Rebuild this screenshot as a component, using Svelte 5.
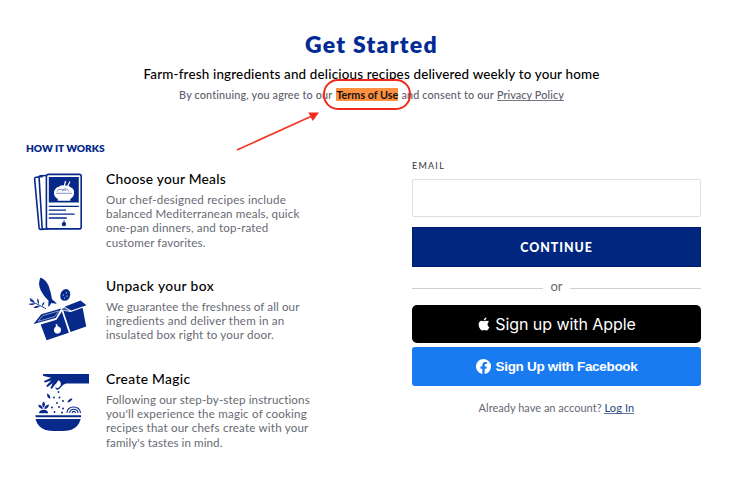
<script>
  const steps = [
    {
      icon: 'cards',
      title: 'Choose your Meals',
      width: 120,
      lines: [
        ['Our chef-designed recipes include', 180],
        ['balanced Mediterranean meals, quick', 193.5],
        ['one-pan dinners, and top-rated', 162.5],
        ['customer favorites.', 99.5],
      ],
    },
    {
      icon: 'box',
      title: 'Unpack your box',
      width: 108,
      lines: [
        ['We guarantee the freshness of all our', 193.5],
        ['ingredients and deliver them in an', 178.5],
        ['insulated box right to your door.', 168],
      ],
    },
    {
      icon: 'bowl',
      title: 'Create Magic',
      width: 84.5,
      lines: [
        ['Following our step-by-step instructions', 204],
        ["you'll experience the magic of cooking", 201],
        ['recipes that our chefs create with your', 202.5],
        ["family's tastes in mind.", 116.5],
      ],
    },
  ];

  // Herbs and salt falling into the bowl.
  const sprinkles = [
    [28.5, 22], [24, 27.5], [29.5, 27.5], [33, 31], [27, 33], [22, 37.5],
    [29, 37], [33, 38.5], [24.5, 42], [32, 42.5],
  ];

  // Tracks a line of text so that it sets to the given measure.
  function fit(node, width) {
    node.style.letterSpacing = '0px';
    const natural = node.getBoundingClientRect().width;
    node.style.letterSpacing = `${(width - natural) / node.textContent.length}px`;
  }
</script>

<main>
  <header>
    <h1><span use:fit={133}>Get Started</span></h1>
    <p class="lead"><span use:fit={456}>Farm-fresh ingredients and delicious recipes delivered weekly to your home</span></p>
    <p class="legal">
      <span use:fit={153.5}>By continuing, you agree to our</span>
      <span class="terms"><mark use:fit={62}>Terms of Use</mark>
        <svg class="callout" width="180" height="80" viewBox="0 0 180 80">
          <rect x="89" y="4" width="86" height="29" rx="14" fill="none" stroke="#ef2b20" stroke-width="2" />
          <path d="M2 74 77 40" stroke="#f13a25" stroke-width="1.8" />
          <path d="M84 36.500 77.700 45 73.400 36.500Z" fill="#f12b1c" />
        </svg>
      </span>
      <span use:fit={92.5}>and consent to our</span>
      <a href="#privacy" use:fit={67}>Privacy Policy</a>
    </p>
  </header>

  <div class="columns">
    <section class="how">
      <h2><span use:fit={78.5}>HOW IT WORKS</span></h2>
      {#each steps as step}
        <article class={step.icon}>
          <div class="icon">
            {#if step.icon === 'cards'}
              <svg width="60" height="64" viewBox="0 0 60 64" fill="none" stroke="#06298a" stroke-width="1.6">
                <path d="m17 6.5-7 .7q-1.5.2-1.4 1.7l4.5 49q.2 1.6 1.8 1.5l8-.7M21 5.500l-6.500.3q-1.500.1-1.400 1.600l3 50.300q.1 1.400 1.500 1.400l5-.2" />
                <rect x="20.400" y="4.400" width="34.800" height="54.500" rx="2" fill="#fff" />
                <path d="M22.800 7h30v25.500h-30z" fill="#06298a" stroke="none" />
                <path d="M28 22q1-4.500 5-5.200 2-2.500 5-1.200 5-.5 7 1.800 3 1 3 4.600v2H28z" fill="#fff" stroke="none" />
                <path d="M28 22.500h20q0 4.500-3.700 6.500v1.700H31.800V29Q28 27 28 22.500Z" fill="#fff" stroke="none" />
                <path d="M31 21.500q1-3 3.500-2t4.500-.8q3 0 4 2.800M36 21q2-2 4-.4M30 23.300h16" stroke-width=".5" />
                <path d="m38 17 1.600-6m1 7L44 11.500" stroke="#fff" stroke-width="1.200" />
                <path d="M22.800 36.300h30M22.800 40.100h17.200M22.800 44.200h25.800M22.800 48h18" stroke-width="1.300" />
                <path d="M37.700 49.700v2q-2 .8-2 2.400 0 2.200 2.200 2.200t2.200-2.200q0-1.600-1.700-2.400v-2Z" fill="#06298a" stroke="none" />
              </svg>
            {:else if step.icon === 'box'}
              <svg width="68" height="72" viewBox="0 0 68 72" fill="#06298a">
                <path d="M16.500 5.500q6 2.700 8.200 8.600 2.300 6.500 3.300 13.200l4.300 3.600q.7.6-.2.900l-4.700-.7-2.400 3.300q-.5.500-.8-.3l.4-5.300Q20 25 16.800 18.600 13.500 11.300 16.500 5.500Z" />
                <path d="M42.500 17q3.900 1.400 3.700 5.400-.5 5.900-5.200 6.400-5 0-4.700-5.300.6-6 6.200-6.500Z" />
                <g fill="#fff"><circle cx="42.400" cy="20.800" r=".6" /><circle cx="39.300" cy="23" r=".6" /><circle cx="43" cy="24" r=".6" /><circle cx="40.500" cy="26" r=".5" /></g>
                <path d="m6 28.500 16 8.200" fill="none" stroke="#06298a" stroke-width=".9" />
                <path d="M10.500 30.500Q6.500 29.500 5.500 26q4 1 5 4.500ZM14.500 32.500q-2.200-3-1.100-6.300 2.400 2.500 1.100 6.300ZM18 34.500q-.2-3.300 2.500-5 .2 3-2.500 5ZM11.500 31.500q-3.800-.8-7 .6 3.500 2.200 7-.6ZM16 34q-4-.8-6.600 1.500 3.700 1.500 6.600-1.500Z" />
                <path d="M9.500 52 17.300 42.300 37 36.500 31.800 46Z" />
                <path d="M14 49.300 18.700 43.700 34.500 39 31 44.600Z" fill="none" stroke="#fff" stroke-width=".5" />
                <path d="M40.500 34.800 56.500 28.500 62.500 33.200 47.300 38.500Z" />
                <path d="m37.300 37.500 3-2 5.500 3.300-6.300-.6Z" opacity=".75" />
                <path d="M16.700 52.500 32.500 47.800 37.800 39.400 44.800 60.800 23.300 68q-.8.2-1-.6Z" />
                <path d="m39.300 38.700 7.500 1.300 11.800-4.200 3.600 18.700-15.700 5.500Z" />
                <path d="m31.700 52.300 1.400-.3.600 2.200q3.100.5 3.300 3.500.1 3.300-3.100 3.800-3.300.2-4-2.800-.4-2.800 2-4.200Z" fill="#fff" />
              </svg>
            {:else}
              <svg width="64" height="66" viewBox="0 0 64 66" fill="#06298a">
                <path d="M59 4v9.500H36q-3 .7-4.700 3.200-1.700 3-4.300 3-2-.5-1.200-3l1.800-4.300-2.500 2.200-3 4q-1.600.6-1.500-.8l2.200-4.800-5 3.800q-1.700.4-1.300-1.200l4.800-5.200-6.300 2.200q-1.500-.3-.7-1.700l6.800-3.200-7.700-1.800q-1.300-.9 0-1.900Z" />
                <path d="M28.500 10.200q-3.400 3.600-2.200 8 3 .2 4.300-2.600 1.100-3.600-2.100-5.400Z" fill="#fff" />
                <path d="M17.200 23.500q3.800 1.800 3 5.300-3.800-1.300-3-5.300ZM42.500 28.300q-.7 3.400-5.200 4.300.8-3.700 5.200-4.300ZM13 39q-4.700-.8-4.700-4.300Q12.300 34.800 13 39ZM13.500 37.700q-2.800-3.700.3-6.200 2.500 3.200-.3 6.200ZM14.300 39q.3-4 4.700-4.500-.5 4.300-4.700 4.500Z" />
                <path d="M9 43.200q.2-3.500 4.600-3.500t4.600 3.500Z" />
                {#each sprinkles as [x, y]}
                  <circle cx={x} cy={y} r=".95" />
                {/each}
                <path d="M36.800 43q.8-6 6.800-6t7 6m-11 0q.6-3.700 4.200-3.700t4.300 3.700m-6 0q.4-1.600 1.700-1.600t1.700 1.600" fill="none" stroke="#06298a" stroke-width="1.100" />
                <path d="M5.300 45.200h45.700v2H5.700ZM5.500 49.100h45.200q-2.200 8-9.300 10.700-3.400 1.200-13.300 1.200t-13.300-1.200Q7.700 57.100 5.500 49.100Z" />
              </svg>
            {/if}
          </div>
          <div class="copy">
            <h3><span use:fit={step.width}>{step.title}</span></h3>
            <p>
              {#each step.lines as [text, width]}
                <span class="line"><span use:fit={width}>{text}</span></span>
              {/each}
            </p>
          </div>
        </article>
      {/each}
    </section>

    <form onsubmit={(e) => e.preventDefault()}>
      <label for="email"><span use:fit={33}>EMAIL</span></label>
      <input id="email" type="email" />
      <button class="continue"><span use:fit={72.5}>CONTINUE</span></button>
      <div class="or"><span>or</span></div>
      <button class="apple">
        <svg width="12" height="14" viewBox="0 0 12 14" fill="#fff">
          <path d="M8.4.4Q8.5 1.7 7.7 2.600 6.900 3.500 5.800 3.500 5.700 2.300 6.500 1.400 7.300.5 8.400.4ZM11 4.800Q9.500 5.700 9.500 7.500 9.600 9.400 11.300 10.200 10.800 11.500 10 12.600 9.300 13.500 8.500 13.500 8 13.500 7.400 13.200 6.300 12.800 5.200 13.200 4.500 13.500 4 13.500 3.200 13.500 2.200 12.100.6 9.900.6 7.500.6 5.700 1.500 4.700 2.400 3.700 3.600 3.700 4.300 3.700 5 4 5.900 4.400 6.900 4 7.800 3.700 8.600 3.700 10.100 3.700 11 4.800Z" />
        </svg>
        <span use:fit={140.5}>Sign up with Apple</span>
      </button>
      <button class="facebook">
        <svg width="15" height="15" viewBox="0 0 24 24">
          <path fill="#fff" d="M24 12a12 12 0 1 0-13.900 11.900v-8.400H7.100V12h3V9.400c0-3 1.800-4.700 4.600-4.700 1.300 0 2.700.2 2.700.2v3h-1.500c-1.500 0-2 .9-2 1.900V12h3.400l-.6 3.500h-2.800v8.400A12 12 0 0 0 24 12Z" />
        </svg>
        <span use:fit={142}>Sign Up with Facebook</span>
      </button>
      <p class="login"><span use:fit={123}>Already have an account?</span> <a href="#login" use:fit={30}>Log In</a></p>
    </form>
  </div>
</main>

<style>
  :global(body) { margin: 0; background: #fff; }
  main { box-sizing: border-box; width: 740px; height: 489px; padding-top: 29px; overflow: hidden; font-family: Lato, "Open Sans", sans-serif; color: #000; }
  h1, h2, h3, p { margin: 0; }
  span, mark, a { white-space: nowrap; }
  header { display: flex; flex-direction: column; align-items: center; width: 743px; height: 108px; }
  h1 { font-size: 23px; line-height: 30px; font-weight: 800; color: #032b94; }
  .lead { margin-top: 6px; font-size: 13.4px; line-height: 18px; font-weight: 500; }
  .legal { display: flex; gap: 3px; margin-top: 5px; font-size: 10.8px; line-height: 14px; font-weight: 500; color: #5d5e6b; }
  .legal a { height: 12px; color: inherit; text-decoration: none; border-bottom: 1px solid #777884; }
  .terms { position: relative; margin-left: 1px; }
  mark { display: inline-block; background: #fd9140; color: #16130f; font-weight: 700; line-height: 13px; }
  .callout { position: absolute; left: -101px; top: -12px; }
  .columns { display: flex; justify-content: space-between; padding: 0 39px 0 26px; }
  h2 { margin-top: 5px; font-size: 10.2px; line-height: 13px; font-weight: 800; color: #06298a; }
  article { display: flex; }
  .cards { height: 107px; margin-top: 15px; }
  .box { height: 93px; }
  .icon { width: 80px; }
  .icon svg { display: block; }
  .box .icon svg { margin: -5px 0 0 -2px; }
  .bowl .icon svg { margin: 0 0 0 4px; }
  h3 { font-size: 13.8px; line-height: 18px; font-weight: 500; }
  .copy p { margin-top: 5px; font-size: 11.6px; line-height: 14.2px; color: #686a73; }
  .line { display: block; }
  form { display: flex; flex-direction: column; width: 289px; }
  label { margin-top: 23px; height: 12px; font-size: 9px; line-height: 12px; color: #333; }
  input { box-sizing: border-box; width: 289px; height: 38px; margin-top: 7px; border: 1px solid #dedede; border-radius: 2px; outline: none; background: #fff; }
  button { display: flex; align-items: center; justify-content: center; padding: 0; border: 0; color: #fff; }
  .continue { height: 40px; margin-top: 10px; background: #00267f; border: 1px solid #001c6c; font: 900 12.4px Lato, sans-serif; }
  .or { display: flex; align-items: center; gap: 7px; height: 16px; margin-top: 11px; font-size: 13px; line-height: 16px; color: #686a73; }
  .or span { width: 13px; text-align: center; }
  .or::before, .or::after { content: ""; flex: 1; height: 1px; margin-top: 5px; background: #cfd0d2; }
  .apple { height: 38px; margin-top: 11px; padding-left: 1px; gap: 5px; border-radius: 5px; background: #000; font: 400 16px Inter, sans-serif; }
  .facebook { height: 39px; margin-top: 4px; gap: 5px; border-radius: 3px; background: #187bf2; font: 700 13.5px "Liberation Sans", Arial, sans-serif; }
  .login { margin-top: 15px; text-align: center; font-size: 11px; line-height: 14px; color: #666873; }
  .login a { display: inline-block; height: 12px; color: #26477f; text-decoration: none; border-bottom: 1px solid #5d759f; }
</style>
